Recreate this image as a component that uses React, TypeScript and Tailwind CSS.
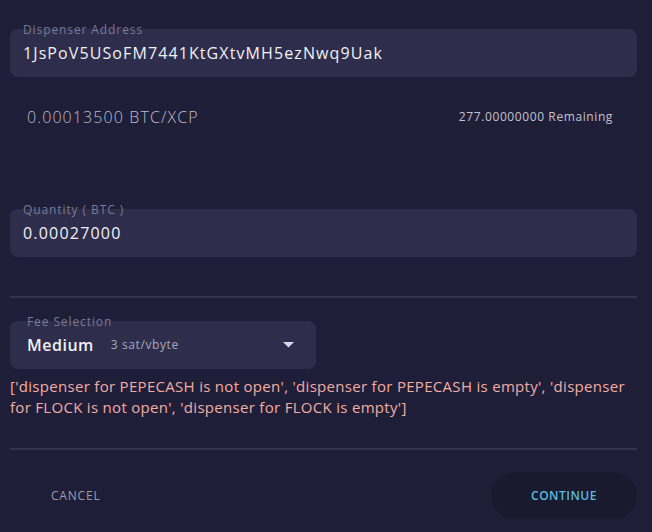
import React from "react";

function Field({ label, children, className = "", labelLeft = "left-[13px]" }: { label: string; children: React.ReactNode; className?: string; labelLeft?: string }) {
  return (
    <div className={`relative h-[48px] rounded-[8px] bg-[#2e2d4b] flex items-center ${className}`}>
      <span className={`absolute ${labelLeft} top-[-7px] text-[12px] leading-[15px] tracking-[0.9px] text-[#7b7a93]`}>{label}</span>
      {children}
    </div>
  );
}

export default function App() {
  return (
    <div className="w-[652px] h-[532px] bg-[#1f1e39] pl-[10px] pr-[15px] pt-[29px] font-['Open_Sans',sans-serif] overflow-hidden">
      <Field label="Dispenser Address">
        <span className="pl-[13px] text-[16px] text-[#f1f1f6] tracking-[1.1px]">1JsPoV5USoFM7441KtGXtvMH5ezNwq9Uak</span>
      </Field>

      <div className="mt-[20px] h-[40px] flex items-center justify-between pl-[17px] pr-[24px]">
        <span className="text-[16px] text-[#bdbccb] font-light tracking-[1.1px]">0.00013500 BTC/XCP</span>
        <span className="text-[12px] text-[#c3c3cf] tracking-[0.6px]">277.00000000 Remaining</span>
      </div>

      <Field label="Quantity ( BTC )" className="mt-[72px]">
        <span className="pl-[13px] text-[16px] text-[#f1f1f6] tracking-[1.2px]">0.00027000</span>
      </Field>

      <div className="mt-[39px] h-[2px] bg-[#34334d]" />

      <Field label="Fee Selection" className="mt-[23px] w-[306px]" labelLeft="left-[17px]">
        <div className="flex items-center w-full pl-[17px] pr-[22px]">
          <span className="text-[16px] font-semibold text-[#f1f1f6] tracking-[0.5px]">Medium</span>
          <span className="ml-[17px] text-[12px] text-[#a9a8ba] tracking-[0.6px]">3 sat/vbyte</span>
          <svg className="ml-auto" width="11" height="6" viewBox="0 0 11 6">
            <path d="M0 0 L11 0 L5.5 5.5 Z" fill="#d8d8e2" />
          </svg>
        </div>
      </Field>

      <p className="mt-[7px] text-[15px] leading-[21px] text-[#f2ada3] tracking-[0.3px]">
        ['dispenser for PEPECASH is not open', 'dispenser for PEPECASH is empty', 'dispenser for FLOCK is not open', 'dispenser for FLOCK is empty']
      </p>

      <div className="mt-[30px] h-[2px] bg-[#34334d]" />

      <div className="mt-[22px] flex items-center justify-between">
        <button className="h-[47px] pl-[41px] pr-[20px] text-[12px] text-[#9d9cae] tracking-[0.8px]">CANCEL</button>
        <button className="h-[47px] w-[146px] rounded-full bg-[#1a1a2f] text-[12px] font-semibold text-[#5db9de] tracking-[0.5px]">CONTINUE</button>
      </div>
    </div>
  );
}
